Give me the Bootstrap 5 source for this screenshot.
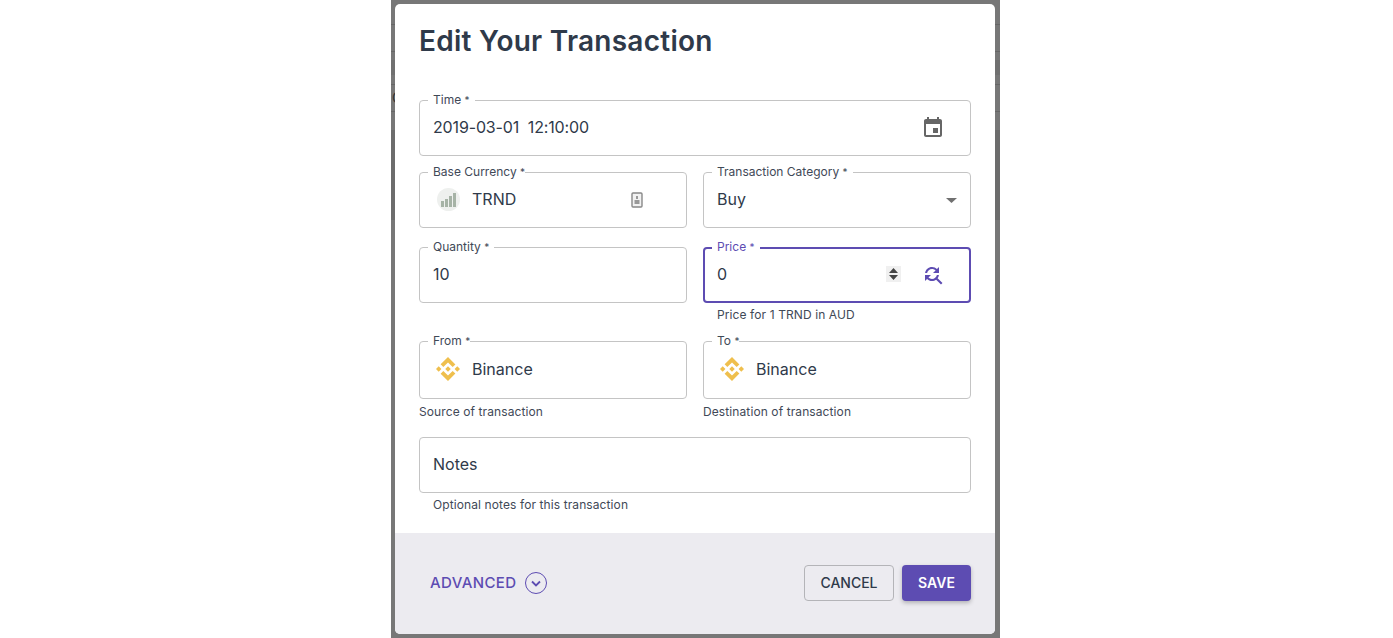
<!DOCTYPE html>
<html lang="en">
<head>
    <meta charset="UTF-8">
    <meta name="viewport" content="width=device-width, initial-scale=1.0">
    <title>Edit Your Transaction</title>
    <link rel="stylesheet" href="https://cdn.jsdelivr.net/npm/bootstrap@5.3.0/dist/css/bootstrap.min.css">
    <style>
        html, body { height: 100%; overflow: hidden; }
        body { background: #fff; font-family: Inter, "Liberation Sans", sans-serif; color: #2f3a4a; }
        .overlay-strip {
            position: relative; width: 609px; height: 638px; margin-left: 391px; padding: 4px 5px 4px 4px;
            background: linear-gradient(to bottom,
                #777 0 24px, #666 24px 25px, #777 25px 51px, #666 51px 52px, #777 52px 60px,
                #707070 60px 75px, #777 75px 84px, #666 84px 85px, #777 85px 111px, #666 111px 112px,
                #777 112px 130px, #6c6c6c 130px 220px, #777 220px);
        }
        .peek-text { position: absolute; left: 1px; top: 88px; font-size: 14px; line-height: 20px; color: #333; }
        .tx-modal { position: relative; width: 600px; height: 630px; background: #fff; border-radius: 5px; overflow: hidden; }
        .tx-title { font-size: 28px; font-weight: 600; letter-spacing: .25px; line-height: 36px; margin: 19px 0 0 24px; color: #2f3a4a; }
        .tx-form { padding: 0 24px; margin-top: 41px; }
        .tx-row { display: grid; grid-template-columns: 268px 268px; column-gap: 16px; margin-top: 16px; }
        .tx-row.gap-price { margin-top: 19px; }
        .tx-row.gap-from { margin-top: 18px; }
        .tx-field { position: relative; height: 56px; border: 1px solid #c4c4c4; border-radius: 4px; padding: 0 13px 2px; font-size: 16px; }
        .tx-field.tall { height: 58px; }
        .tx-field.tall + .tx-help { margin-top: 5px; }
        .tx-field.active { border: 2px solid #5d4cb2; padding: 0 12px 2px; }
        .tx-field.notes { margin-top: 17px; }
        .tx-label { position: absolute; top: -9px; left: 8px; padding: 0 5px; background: #fff; font-size: 12px; line-height: 16px; color: #3f4957; white-space: nowrap; }
        .tx-label.tight { padding-right: 0; }
        .tx-label i { font-style: normal; font-size: 10px; }
        .tx-field.active .tx-label { top: -10px; left: 7px; color: #5d4cb2; }
        .tx-date { letter-spacing: -.15px; }
        .tx-help { font-size: 12px; line-height: 16px; letter-spacing: .1px; color: #3f4957; margin-top: 4px; }
        .tx-help.indent { padding-left: 14px; }
        .tx-end-icon { margin-right: 12px; margin-bottom: -2px; }
        .tx-lock { margin-right: 30px; margin-bottom: -2px; }
        .tx-caret { margin-bottom: -2px; }
        .tx-logo { margin: 0 12px 0 3px; }
        .coin-grey { width: 23px; height: 23px; margin: 0 12px 0 4px; background: #eef0ee; border-radius: 50%; }
        .spin-box { width: 15px; height: 16px; margin-right: 20px; background: #f0f0f0; }
        .tx-foot { height: 101px; padding: 32px 24px 0 35px; background: #ecebf0; }
        .tx-adv { height: 36px; font-size: 15px; font-weight: 500; letter-spacing: .4px; color: #5d4cb2; }
        .btn-cancel { width: 90px; height: 36px; padding: 0 0 2px; font-size: 14px; font-weight: 500; color: #2f3a4a; background: transparent; border: 1px solid #b4b4b8; border-radius: 4px; }
        .btn-save { width: 69px; height: 36px; padding: 0 0 2px; font-size: 14px; font-weight: 600; color: #fff; background: #5d4cb2; border: 0; border-radius: 4px; box-shadow: 0 2px 4px rgba(0,0,0,.25); }
    </style>
</head>
<body>
    <div class="overlay-strip">
        <span class="peek-text">C</span>
        <div class="tx-modal d-flex flex-column">
            <h2 class="tx-title">Edit Your Transaction</h2>

            <form class="tx-form d-flex flex-column">
                <div class="tx-field d-flex align-items-center justify-content-between">
                    <span class="tx-label">Time <i>*</i></span>
                    <span class="tx-date">2019-03-01&nbsp; 12:10:00</span>
                    <svg class="tx-end-icon" width="24" height="24" viewBox="0 0 24 24" fill="#666"><path d="M17 12h-5v5h5v-5zM16 1v2H8V1H6v2H5c-1.11 0-1.99.9-1.99 2L3 19c0 1.1.89 2 2 2h14c1.1 0 2-.9 2-2V5c0-1.1-.9-2-2-2h-1V1h-2zm3 18H5V8h14v11z"/></svg>
                </div>

                <div class="tx-row">
                    <div class="tx-field d-flex align-items-center">
                        <span class="tx-label tight">Base Currency <i>*</i></span>
                        <span class="coin-grey d-flex align-items-center justify-content-center flex-shrink-0">
                            <svg width="16" height="15" viewBox="0 0 16 15" fill="#a6b3a6"><rect x="0" y="9" width="3" height="6"/><rect x="4" y="7" width="3" height="8"/><rect x="8" y="4" width="3" height="11"/><rect x="12" y="1" width="3" height="14"/></svg>
                        </span>
                        <span>TRND</span>
                        <svg class="ms-auto tx-lock" width="12" height="16" viewBox="0 0 12 16"><rect x="1" y="1" width="10" height="14" rx="1" fill="#f2f2f2" stroke="#888" stroke-width="1.4"/><rect x="3.5" y="8" width="5" height="4" fill="#999"/><rect x="5" y="4" width="2" height="3" fill="#999"/></svg>
                    </div>
                    <div class="tx-field d-flex align-items-center justify-content-between">
                        <span class="tx-label">Transaction Category <i>*</i></span>
                        <span>Buy</span>
                        <svg class="tx-caret" width="11" height="5" viewBox="0 0 11 5" fill="#707070"><path d="M0 0h11L5.500 5z"/></svg>
                    </div>
                </div>

                <div class="tx-row gap-price">
                    <div class="tx-field d-flex align-items-center">
                        <span class="tx-label">Quantity <i>*</i></span>
                        <span>10</span>
                    </div>
                    <div>
                        <div class="tx-field active d-flex align-items-center">
                            <span class="tx-label">Price <i>*</i></span>
                            <span>0</span>
                            <span class="spin-box ms-auto d-flex align-items-center justify-content-center">
                                <svg width="9" height="12" viewBox="0 0 9 12" fill="#444"><path d="M4.500 0 9 5H0zM4.500 12 0 7h9z"/></svg>
                            </span>
                            <svg class="tx-end-icon" width="24" height="24" viewBox="0 0 24 24" fill="#5d4cb2"><path d="M11 6c1.380 0 2.630.56 3.540 1.460L12 10h6V4l-2.050 2.050C14.680 4.780 12.930 4 11 4c-3.530 0-6.430 2.610-6.920 6H6.100c.46-2.280 2.480-4 4.900-4zm5.640 9.140c.66-.9 1.120-1.970 1.280-3.140H15.900c-.46 2.280-2.480 4-4.900 4-1.380 0-2.630-.56-3.540-1.460L10 12H4v6l2.050-2.050C7.320 17.220 9.070 18 11 18c1.550 0 2.980-.51 4.140-1.360L20 21.490 21.490 20l-4.850-4.860z"/></svg>
                        </div>
                        <div class="tx-help indent">Price for 1 TRND in AUD</div>
                    </div>
                </div>

                <div class="tx-row gap-from">
                    <div>
                        <div class="tx-field tall d-flex align-items-center">
                            <span class="tx-label tight">From <i>*</i></span>
                            <svg class="tx-logo flex-shrink-0" width="24" height="24" viewBox="6 6 20 20" fill="#efbf4d"><path d="M12.116 14.404 16 10.520l3.886 3.886 2.260-2.260L16 6l-6.144 6.144 2.260 2.260zM6 16l2.260-2.260L10.520 16l-2.260 2.260L6 16zm6.116 1.596L16 21.480l3.886-3.886 2.260 2.259L16 26l-6.144-6.144 2.260-2.260zM21.480 16l2.260-2.260L26 16l-2.260 2.260L21.480 16zm-3.188 0L16 18.294 13.706 16 16 13.706 18.292 16z"/></svg>
                            <span>Binance</span>
                        </div>
                        <div class="tx-help">Source of transaction</div>
                    </div>
                    <div>
                        <div class="tx-field tall d-flex align-items-center">
                            <span class="tx-label tight">To <i>*</i></span>
                            <svg class="tx-logo flex-shrink-0" width="24" height="24" viewBox="6 6 20 20" fill="#efbf4d"><path d="M12.116 14.404 16 10.520l3.886 3.886 2.260-2.260L16 6l-6.144 6.144 2.260 2.260zM6 16l2.260-2.260L10.520 16l-2.260 2.260L6 16zm6.116 1.596L16 21.480l3.886-3.886 2.260 2.259L16 26l-6.144-6.144 2.260-2.260zM21.480 16l2.260-2.260L26 16l-2.260 2.260L21.480 16zm-3.188 0L16 18.294 13.706 16 16 13.706 18.292 16z"/></svg>
                            <span>Binance</span>
                        </div>
                        <div class="tx-help">Destination of transaction</div>
                    </div>
                </div>

                <div class="tx-field notes d-flex align-items-center">
                    <span>Notes</span>
                </div>
                <div class="tx-help indent">Optional notes for this transaction</div>
            </form>

            <div class="tx-foot d-flex justify-content-between align-items-start mt-auto">
                <div class="tx-adv d-flex align-items-center gap-2">
                    <span>ADVANCED</span>
                    <svg width="22" height="22" viewBox="0 0 22 22" fill="none" stroke="#5d4cb2"><circle cx="11" cy="11" r="10.500"/><path d="m7 9.500 4 4 4-4" stroke-width="1.800"/></svg>
                </div>
                <div class="d-flex gap-2">
                    <button type="button" class="btn btn-cancel">CANCEL</button>
                    <button type="button" class="btn btn-save">SAVE</button>
                </div>
            </div>
        </div>
    </div>
    <script src="https://cdn.jsdelivr.net/npm/bootstrap@5.3.0/dist/js/bootstrap.bundle.min.js"></script>
</body>
</html>
